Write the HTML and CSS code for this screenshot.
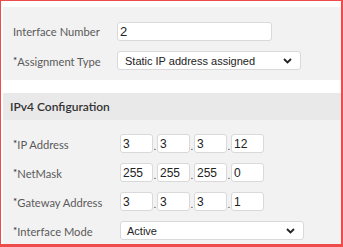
FILE: index.html
```html
<!DOCTYPE html>
<html lang="en">
<head>
    <meta charset="UTF-8">
    <meta name="viewport" content="width=device-width, initial-scale=1.0">
    <title>Interface Settings</title>
    <link rel="stylesheet" href="styles.css">
</head>
<body>
    <div class="frame">
        <!-- Interface section -->
        <div class="panel panel-top">
            <div class="row">
                <label class="label">Interface Number</label>
                <input class="field field-text" type="text" value="2">
            </div>
            <div class="row">
                <label class="label"><span class="req">*</span>Assignment Type</label>
                <div class="field select select-wide">
                    <span>Static IP address assigned</span>
                    <svg width="9" height="6" viewBox="0 0 9 6"><path d="M1 1 L4.5 4.5 L8 1" fill="none" stroke="#222" stroke-width="1.8"/></svg>
                </div>
            </div>
        </div>

        <!-- IPv4 section -->
        <div class="section-title">IPv4 Configuration</div>
        <div class="panel panel-ipv4">
            <div class="row">
                <label class="label"><span class="req">*</span>IP Address</label>
                <div class="octets">
                    <input class="field octet" type="text" value="3"><span class="dot">.</span>
                    <input class="field octet" type="text" value="3"><span class="dot">.</span>
                    <input class="field octet" type="text" value="3"><span class="dot">.</span>
                    <input class="field octet" type="text" value="12">
                </div>
            </div>
            <div class="row">
                <label class="label"><span class="req">*</span>NetMask</label>
                <div class="octets">
                    <input class="field octet" type="text" value="255"><span class="dot">.</span>
                    <input class="field octet" type="text" value="255"><span class="dot">.</span>
                    <input class="field octet" type="text" value="255"><span class="dot">.</span>
                    <input class="field octet" type="text" value="0">
                </div>
            </div>
            <div class="row">
                <label class="label"><span class="req">*</span>Gateway Address</label>
                <div class="octets">
                    <input class="field octet" type="text" value="3"><span class="dot">.</span>
                    <input class="field octet" type="text" value="3"><span class="dot">.</span>
                    <input class="field octet" type="text" value="3"><span class="dot">.</span>
                    <input class="field octet" type="text" value="1">
                </div>
            </div>
            <div class="row">
                <label class="label"><span class="req">*</span>Interface Mode</label>
                <div class="field select select-mode">
                    <span>Active</span>
                    <svg width="9" height="6" viewBox="0 0 9 6"><path d="M1 1 L4.5 4.5 L8 1" fill="none" stroke="#222" stroke-width="1.8"/></svg>
                </div>
            </div>
        </div>
    </div>
</body>
</html>
```

FILE: styles.css
```css
/* General styles */
body {
    margin: 0;
    padding: 0;
    background: white;
    font-family: Lato, "Liberation Sans", sans-serif;
}
.frame {
    box-sizing: border-box;
    width: 343px;
    height: 247px;
    border: 1px solid #ee4b4b;
    border-right-width: 2px;
    border-bottom-width: 3px;
    padding: 6px 0 0 2px;
    display: flex;
    flex-direction: column;
    overflow: hidden;
}

/* Panels */
.panel {
    background-color: #f2f2f2;
    display: flex;
    flex-direction: column;
    gap: 10px;
    padding-left: 10px;
}
.panel-top {
    padding-top: 15px;
    padding-bottom: 10px;
    margin-bottom: 13px;
}
.panel-ipv4 {
    flex: 1;
    padding-top: 14px;
}
.section-title {
    background-color: #e9e9e9;
    height: 27px;
    line-height: 27px;
    padding-left: 7px;
    font-size: 12px;
    font-weight: 600;
    color: #333;
}

/* Rows */
.row {
    display: flex;
    align-items: center;
    height: 19px;
}
.label {
    width: 104px;
    flex: none;
    font-size: 11.2px;
    color: #5a5a5a;
}
.panel-ipv4 .label {
    width: 107px;
}
.req {
    color: #222;
    font-size: 10px;
    vertical-align: 2px;
}

/* Inputs */
.field {
    box-sizing: border-box;
    height: 19px;
    margin: 0;
    background: white;
    border: 1px solid #d9d9d9;
    border-radius: 3px;
    font-family: "Liberation Sans", Arial, sans-serif;
    color: #222;
    outline: none;
}
.field-text {
    width: 155px;
    padding: 0 2px;
    font-size: 13px;
}
.select {
    display: flex;
    align-items: center;
    justify-content: space-between;
    padding: 0 8px 0 7px;
    font-size: 11px;
}
.select-wide {
    width: 184px;
}
.select-mode {
    width: 184px;
    padding-left: 6px;
}
.octets {
    display: flex;
    align-items: center;
}
.octet {
    width: 33px;
    padding: 0 2px;
    font-size: 12px;
}
.dot {
    width: 4px;
    font-family: "Liberation Sans", Arial, sans-serif;
    font-size: 10px;
    color: #333;
    text-align: center;
    align-self: flex-end;
    line-height: 12px;
}
```
